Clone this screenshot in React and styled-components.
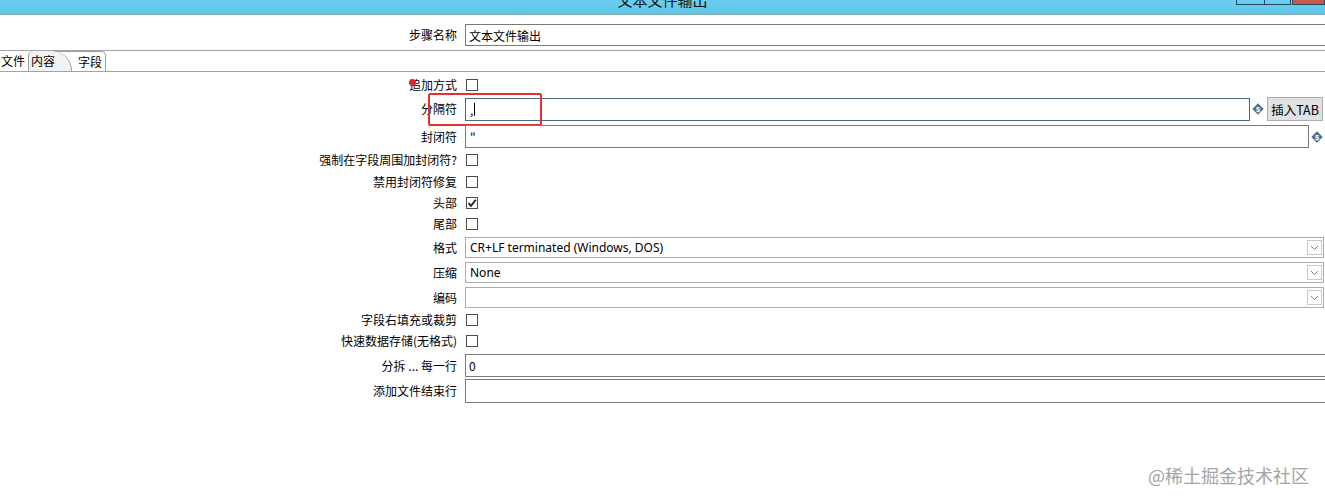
import React from 'react';
import styled, { createGlobalStyle } from 'styled-components';

const GlobalStyle = createGlobalStyle`
  html, body {
    margin: 0;
    background: #fff;
    font-family: "Noto Sans CJK SC", "Noto Sans", sans-serif;
    font-size: 12px;
    color: #000;
  }
`;

const Window = styled.div`
  width: 1325px;
  height: 503px;
  position: relative;
  overflow: hidden;
  background: #fff;
  display: flex;
  flex-direction: column;
`;

const TitleBar = styled.div`
  height: 14px;
  background: linear-gradient(#6ccdf0, #5ec8e5);
  border-bottom: 1px solid #86a9ba;
  display: grid;
  grid-template-columns: 1fr auto 1fr;
  overflow: hidden;
`;

const TitleText = styled.div`
  grid-column: 2;
  font-size: 15px;
  line-height: 15px;
  color: #111;
  margin-top: -8px;
  white-space: nowrap;
`;

const WinControls = styled.div`
  grid-column: 3;
  justify-self: end;
  align-self: start;
  display: flex;
`;

const WinButton = styled.div`
  width: ${p => p.$w}px;
  height: 5px;
  box-sizing: border-box;
  border: 1px solid #1f4c62;
  border-top: none;
  margin-left: ${p => (p.$close ? 1 : -1)}px;
  background: ${p => (p.$close ? '#c85a4c' : 'transparent')};
`;

const HeaderRow = styled.div`
  display: grid;
  grid-template-columns: 457px 1fr;
  column-gap: 8px;
  align-items: center;
  padding-top: 9px;
`;

const Label = styled.div`
  height: 12px;
  display: flex;
  align-items: center;
  justify-content: flex-end;
  white-space: nowrap;
  line-height: 12px;
  font-size: 12px;
`;

const LabelText = styled.span`
  position: relative;
`;

const RedDot = styled.span`
  position: absolute;
  left: 0;
  top: 0;
  width: 7px;
  height: 7px;
  border-radius: 50%;
  background: #e02424;
`;

const TabStrip = styled.div`
  margin-top: 4px;
  height: 20px;
  border-top: 1px solid #a3a3a3;
  border-bottom: 1px solid #a3a3a3;
  display: flex;
  align-items: flex-end;
`;

const Tab = styled.div`
  height: 20px;
  box-sizing: border-box;
  line-height: 19px;
  font-size: 12px;
  white-space: nowrap;
  padding: 0 ${p => p.$pr || 2}px 0 ${p => p.$pl || 2}px;
  margin-left: ${p => p.$ml || 0}px;
  position: relative;
  z-index: ${p => (p.$selected ? 2 : 1)};
  background: ${p => (p.$selected ? '#f2f2f2' : 'transparent')};
  border-top: ${p => (p.$edge ? '1px solid #9c9c9c' : 'none')};
  border-right: ${p => (p.$edge || p.$selected ? '1px solid #9c9c9c' : 'none')};
  border-left: ${p => (p.$selected ? '1px solid #9c9c9c' : 'none')};
  border-radius: ${p => (p.$selected ? '5px 20px 0 0 / 5px 20px 0 0' : p.$edge ? '0 5px 0 0' : '0')};
`;

const Form = styled.div`
  display: flex;
  flex-direction: column;
`;

const Row = styled.div`
  display: grid;
  grid-template-columns: 457px 1fr;
  column-gap: 8px;
  align-items: center;
  margin-top: ${p => p.$mt}px;
  position: relative;
`;

const Control = styled.div`
  display: flex;
  align-items: center;
  padding-right: ${p => p.$pr || 0}px;
  margin-right: ${p => p.$mr || 0}px;
`;

const Field = styled.div`
  flex: 1;
  height: ${p => p.$h || 23}px;
  box-sizing: border-box;
  border: 1px solid ${p => (p.$focus ? '#456b84' : '#7a7a7a')};
  background: #fff;
  display: flex;
  align-items: center;
  padding-left: ${p => p.$pl || 3}px;
  font-size: 12px;
  white-space: nowrap;
`;

const Caret = styled.span`
  display: inline-block;
  width: 1px;
  height: 13px;
  background: #000;
  margin-left: 1px;
`;

const Box = styled.div`
  width: 12px;
  height: 12px;
  box-sizing: border-box;
  border: 1px solid #4a4a4a;
  background: #fff;
  margin-left: 1px;
  display: flex;
  align-items: center;
  justify-content: center;
`;

const Select = styled.div`
  flex: 1;
  height: 21px;
  box-sizing: border-box;
  border: 1px solid #acacac;
  background: #fff;
  display: flex;
  align-items: center;
  justify-content: space-between;
  padding-left: 4px;
  padding-right: 1px;
  font-family: "Noto Sans", "Noto Sans CJK SC", sans-serif;
  font-size: 12px;
`;

const DropButton = styled.div`
  width: 15px;
  height: 15px;
  box-sizing: border-box;
  border: 1px solid #c8c8c8;
  display: flex;
  align-items: center;
  justify-content: center;
`;

const InsertButton = styled.div`
  width: 56px;
  height: 24px;
  box-sizing: border-box;
  margin-left: 3px;
  background: #e1e1e1;
  border: 1px solid #adadad;
  display: flex;
  align-items: center;
  justify-content: center;
  font-size: 12.5px;
  white-space: nowrap;
`;

const DiamondWrap = styled.div`
  width: 12px;
  height: 12px;
  margin-left: 2px;
  display: flex;
`;

const Annotation = styled.div`
  position: absolute;
  left: 428px;
  top: -4px;
  width: 114px;
  height: 33px;
  box-sizing: border-box;
  border: 2px solid #e5302d;
  border-radius: 2px;
  pointer-events: none;
`;

const Watermark = styled.div`
  position: absolute;
  right: 16px;
  bottom: 15px;
  font-size: 18px;
  color: #a4a4a4;
  white-space: nowrap;
`;

const Diamond = () => (
  <DiamondWrap>
    <svg width="12" height="12" viewBox="0 0 12 12">
      <polygon points="6,0.3 11.7,6 6,11.7 0.3,6" fill="#4f6f89" />
      <text x="6" y="8.6" textAnchor="middle" fontSize="7.5" fontWeight="bold" fill="#fff" fontFamily="Liberation Sans, sans-serif">$</text>
    </svg>
  </DiamondWrap>
);

const Checkbox = ({ checked }) => (
  <Box>
    {checked && (
      <svg width="10" height="10" viewBox="0 0 10 10">
        <path d="M1.5 5.2 L4 7.8 L8.8 1.8" fill="none" stroke="#1a1a1a" strokeWidth="1.8" />
      </svg>
    )}
  </Box>
);

const Dropdown = ({ value }) => (
  <Select>
    <span>{value}</span>
    <DropButton>
      <svg width="9" height="6" viewBox="0 0 9 6">
        <polyline points="1,1 4.5,4.5 8,1" fill="none" stroke="#7d7d7d" strokeWidth="1" />
      </svg>
    </DropButton>
  </Select>
);

export default function App() {
  return (
    <Window>
      <GlobalStyle />
      <TitleBar>
        <TitleText>文本文件输出</TitleText>
        <WinControls>
          <WinButton $w={29} />
          <WinButton $w={27} />
          <WinButton $w={33} $close />
        </WinControls>
      </TitleBar>

      <HeaderRow>
        <Label>步骤名称</Label>
        <Control $mr={-2}>
          <Field $h={22}>文本文件输出</Field>
        </Control>
      </HeaderRow>

      <TabStrip>
        <Tab $pl={1} $pr={3}>文件</Tab>
        <Tab $selected $pl={2} $pr={16}>内容</Tab>
        <Tab $edge $ml={-20} $pl={26} $pr={3}>字段</Tab>
      </TabStrip>

      <Form>
        <Row $mt={7}>
          <Label>
            <LabelText>
              <RedDot />
              追加方式
            </LabelText>
          </Label>
          <Control><Checkbox /></Control>
        </Row>

        <Row $mt={6}>
          <Label>分隔符</Label>
          <Control $pr={2}>
            <Field $focus $pl={4}>,<Caret /></Field>
            <Diamond />
            <InsertButton>插入TAB</InsertButton>
          </Control>
          <Annotation />
        </Row>

        <Row $mt={4}>
          <Label>封闭符</Label>
          <Control $pr={2}>
            <Field $pl={4}>"</Field>
            <Diamond />
          </Control>
        </Row>

        <Row $mt={6}>
          <Label>强制在字段周围加封闭符?</Label>
          <Control><Checkbox /></Control>
        </Row>

        <Row $mt={10}>
          <Label>禁用封闭符修复</Label>
          <Control><Checkbox /></Control>
        </Row>

        <Row $mt={9}>
          <Label>头部</Label>
          <Control><Checkbox checked /></Control>
        </Row>

        <Row $mt={9}>
          <Label>尾部</Label>
          <Control><Checkbox /></Control>
        </Row>

        <Row $mt={7}>
          <Label>格式</Label>
          <Control $pr={1}><Dropdown value="CR+LF terminated (Windows, DOS)" /></Control>
        </Row>

        <Row $mt={4}>
          <Label>压缩</Label>
          <Control $pr={1}><Dropdown value="None" /></Control>
        </Row>

        <Row $mt={4}>
          <Label>编码</Label>
          <Control $pr={1}><Dropdown value="" /></Control>
        </Row>

        <Row $mt={6}>
          <Label>字段右填充或裁剪</Label>
          <Control><Checkbox /></Control>
        </Row>

        <Row $mt={9}>
          <Label>快速数据存储(无格式)</Label>
          <Control><Checkbox /></Control>
        </Row>

        <Row $mt={7}>
          <Label>分拆 ... 每一行</Label>
          <Control $mr={-1}>
            <Field>0</Field>
          </Control>
        </Row>

        <Row $mt={2}>
          <Label>添加文件结束行</Label>
          <Control $mr={-1}>
            <Field $h={24} />
          </Control>
        </Row>
      </Form>

      <Watermark>@稀土掘金技术社区</Watermark>
    </Window>
  );
}
